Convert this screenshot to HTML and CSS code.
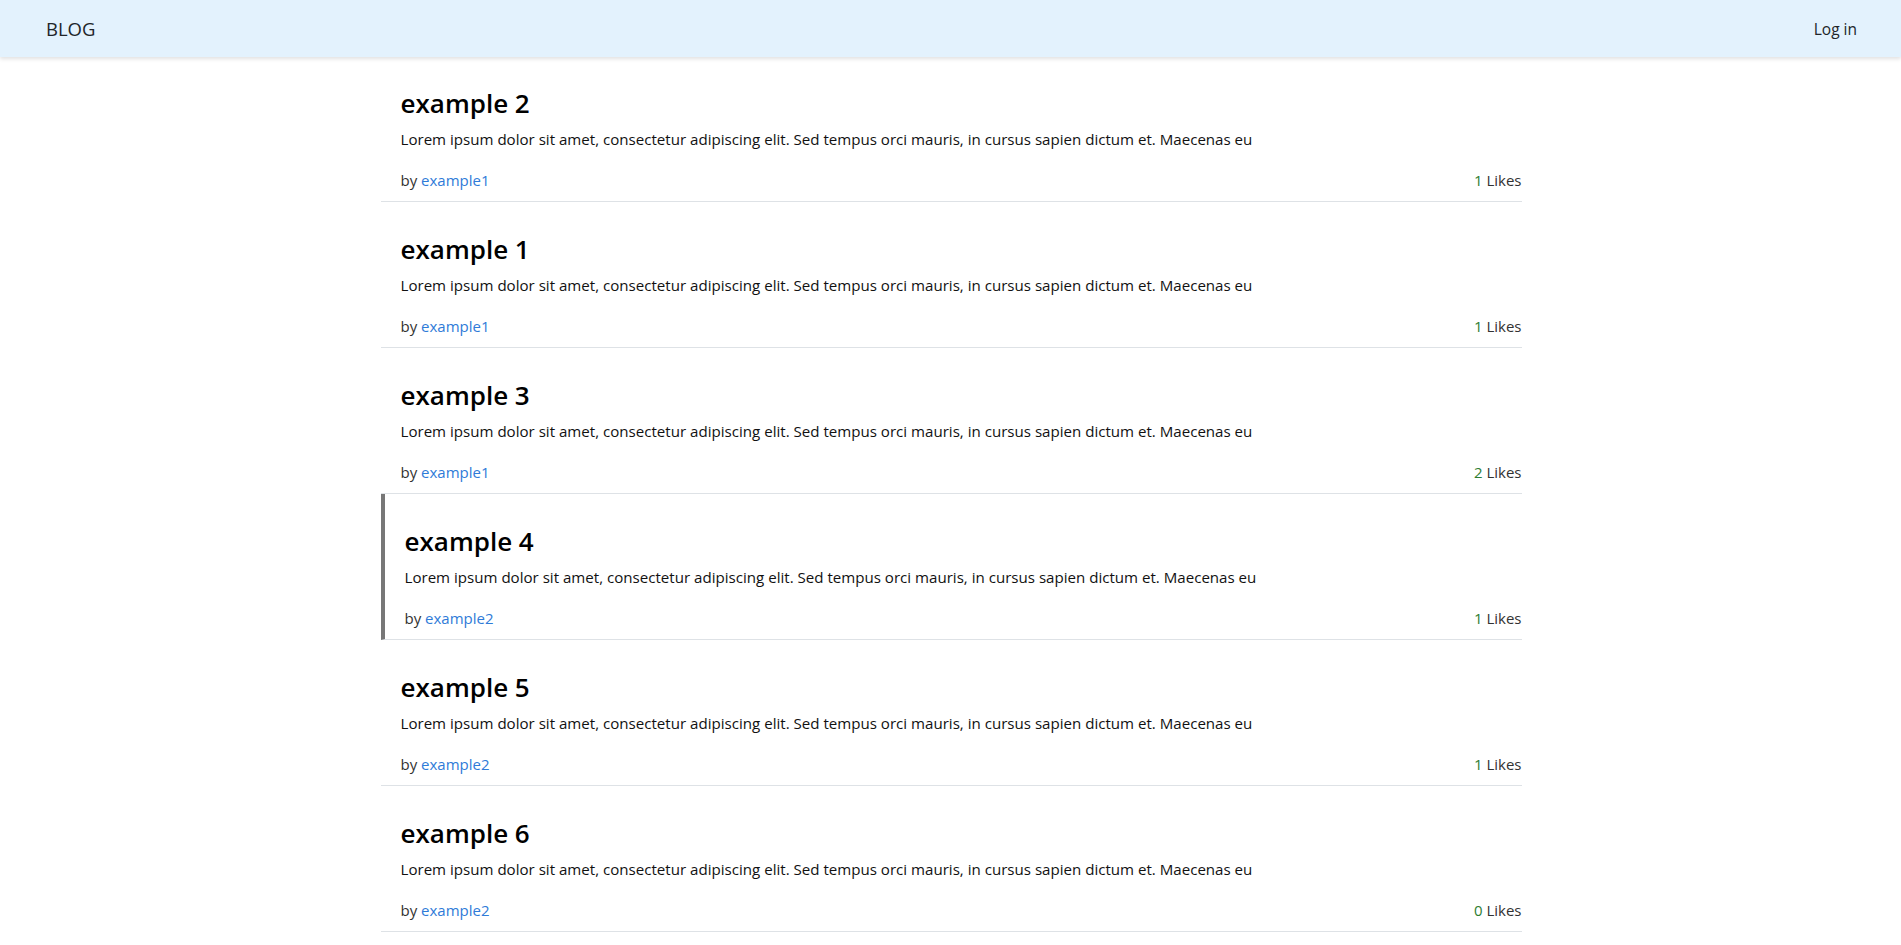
FILE: index.html
```html
<!DOCTYPE html>
<html lang="en">
<head>
<meta charset="utf-8">
<title>Blog</title>
<link rel="stylesheet" href="styles.css">
</head>
<body>
<header class="navbar">
  <a class="brand" href="#">BLOG</a>
  <a class="nav-link" href="#">Log in</a>
</header>
<main class="container">
  <ul class="post-list">
    <li class="post">
      <h4 class="post-title">example 2</h4>
      <p class="post-body">Lorem ipsum dolor sit amet, consectetur adipiscing elit. Sed tempus orci mauris, in cursus sapien dictum et. Maecenas eu</p>
      <div class="post-meta"><span>by <a href="#" class="author">example1</a></span><span><span class="count">1</span> Likes</span></div>
    </li>
    <li class="post">
      <h4 class="post-title">example 1</h4>
      <p class="post-body">Lorem ipsum dolor sit amet, consectetur adipiscing elit. Sed tempus orci mauris, in cursus sapien dictum et. Maecenas eu</p>
      <div class="post-meta"><span>by <a href="#" class="author">example1</a></span><span><span class="count">1</span> Likes</span></div>
    </li>
    <li class="post">
      <h4 class="post-title">example 3</h4>
      <p class="post-body">Lorem ipsum dolor sit amet, consectetur adipiscing elit. Sed tempus orci mauris, in cursus sapien dictum et. Maecenas eu</p>
      <div class="post-meta"><span>by <a href="#" class="author">example1</a></span><span><span class="count">2</span> Likes</span></div>
    </li>
    <li class="post post-active">
      <h4 class="post-title">example 4</h4>
      <p class="post-body">Lorem ipsum dolor sit amet, consectetur adipiscing elit. Sed tempus orci mauris, in cursus sapien dictum et. Maecenas eu</p>
      <div class="post-meta"><span>by <a href="#" class="author">example2</a></span><span><span class="count">1</span> Likes</span></div>
    </li>
    <li class="post">
      <h4 class="post-title">example 5</h4>
      <p class="post-body">Lorem ipsum dolor sit amet, consectetur adipiscing elit. Sed tempus orci mauris, in cursus sapien dictum et. Maecenas eu</p>
      <div class="post-meta"><span>by <a href="#" class="author">example2</a></span><span><span class="count">1</span> Likes</span></div>
    </li>
    <li class="post">
      <h4 class="post-title">example 6</h4>
      <p class="post-body">Lorem ipsum dolor sit amet, consectetur adipiscing elit. Sed tempus orci mauris, in cursus sapien dictum et. Maecenas eu</p>
      <div class="post-meta"><span>by <a href="#" class="author">example2</a></span><span><span class="count">0</span> Likes</span></div>
    </li>
  </ul>
</main>
</body>
</html>
```

FILE: styles.css
```css
* { box-sizing: border-box; }

html, body {
  margin: 0;
  padding: 0;
  background: #ffffff;
  font-family: "Open Sans", "Noto Sans", "Liberation Sans", sans-serif;
  color: #212529;
}

a { text-decoration: none; }

.navbar {
  height: 57px;
  background: #e3f2fd;
  box-shadow: 0 2px 4px rgba(0, 0, 0, 0.12);
  display: flex;
  align-items: center;
  justify-content: space-between;
  padding: 0 44px 0 46px;
  position: relative;
  z-index: 1;
}

.brand {
  font-size: 18.5px;
  color: #212529;
}

.nav-link {
  font-size: 15.5px;
  color: #212529;
}

.container {
  width: 1142px;
  margin: 0 auto;
  padding-left: 1px;
}

.post-list {
  list-style: none;
  margin: 0;
  padding: 0;
}

.post {
  padding: 33px 0 11px 20px;
  border-bottom: 1px solid #dee2e6;
}

.post:first-child {
  padding-top: 32px;
}

.post-active {
  border-left: 4px solid #777777;
}

.post-title {
  margin: 0 0 11px;
  font-size: 26px;
  font-weight: 600;
  line-height: 29px;
  color: #000000;
}

.post-body {
  margin: 0 0 19px;
  font-size: 15.1px;
  line-height: 21px;
  color: #111111;
}

.post-meta {
  display: flex;
  justify-content: space-between;
  font-size: 15px;
  line-height: 21px;
  padding-top: 1px;
  margin-bottom: -1px;
  color: #333333;
}

.author {
  color: #2f7bd8;
}

.count {
  color: #2e7d32;
}
```
